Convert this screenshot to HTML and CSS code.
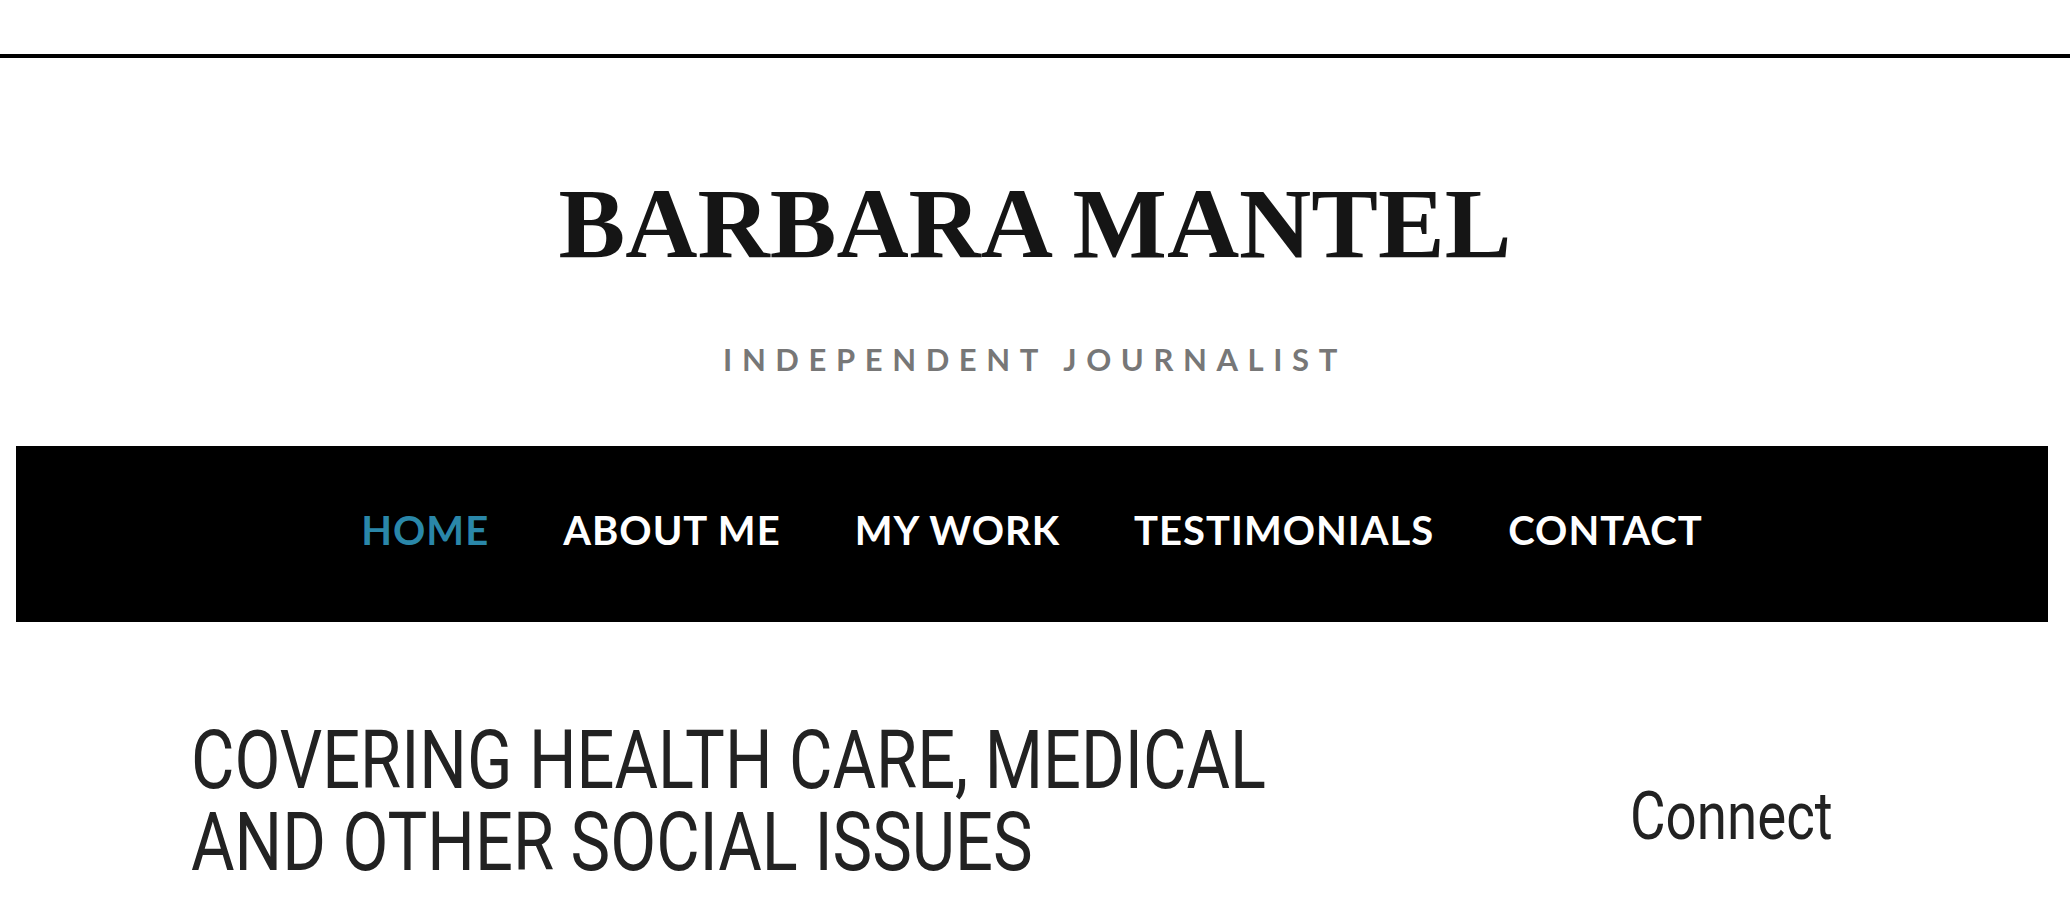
FILE: index.html
```html
<!DOCTYPE html>
<html lang="en">
<head>
<meta charset="utf-8">
<title>Barbara Mantel</title>
<link rel="stylesheet" href="styles.css">
</head>
<body>
<header class="site-header">
  <h1 class="site-title">BARBARA MANTEL</h1>
  <p class="site-tagline">INDEPENDENT JOURNALIST</p>
</header>
<nav class="main-nav">
  <ul class="nav-list">
    <li><a class="nav-link active" href="#">HOME</a></li>
    <li><a class="nav-link" href="#">ABOUT ME</a></li>
    <li><a class="nav-link" href="#">MY WORK</a></li>
    <li><a class="nav-link" href="#">TESTIMONIALS</a></li>
    <li><a class="nav-link" href="#">CONTACT</a></li>
  </ul>
</nav>
<div class="content">
  <main class="primary">
    <h2 class="page-heading"><span class="heading-line">COVERING HEALTH CARE, MEDICAL</span><span class="heading-line">AND OTHER SOCIAL ISSUES</span></h2>
  </main>
  <aside class="sidebar">
    <h3 class="widget-title">Connect</h3>
  </aside>
</div>
</body>
</html>
```

FILE: styles.css
```css
html, body {
  margin: 0;
  padding: 0;
  background: #ffffff;
}

body {
  overflow: hidden;
}

.site-header {
  margin-top: 54px;
  border-top: 4px solid #000000;
  padding-top: 116px;
  text-align: center;
}

.site-title {
  margin: 0;
  font-family: "Liberation Serif", "Times New Roman", serif;
  font-weight: 700;
  font-size: 100px;
  line-height: 100px;
  letter-spacing: 0;
  color: #151515;
}

.site-tagline {
  margin: 70px 0 0;
  font-family: "Lato", "Liberation Sans", sans-serif;
  font-weight: 700;
  font-size: 31px;
  line-height: 31px;
  letter-spacing: 9.6px;
  color: #777777;
}

.main-nav {
  margin: 71px 22px 0 16px;
  background: #000000;
  padding: 64px 0 72px;
}

.nav-list {
  list-style: none;
  margin: 0;
  padding: 0;
  display: flex;
  justify-content: center;
  gap: 74px;
}

.nav-link {
  display: block;
  font-family: "Lato", "Liberation Sans", sans-serif;
  font-weight: 700;
  font-size: 40px;
  line-height: 40px;
  letter-spacing: 1px;
  color: #ffffff;
  text-decoration: none;
}

.nav-link.active {
  color: #2a87a9;
}

.content {
  display: flex;
  padding: 97px 140px 0 191px;
}

.primary {
  flex: 1;
}

.page-heading {
  margin: 0;
  font-family: "Roboto", "Liberation Sans", sans-serif;
  font-weight: 400;
  font-size: 81.6px;
  line-height: 82px;
  color: #222222;
  transform: scaleX(0.818);
  transform-origin: left top;
  white-space: nowrap;
}

.heading-line {
  display: block;
}

.sidebar {
  width: 300px;
  padding-top: 56px;
}

.widget-title {
  margin: 0;
  font-family: "Roboto", "Liberation Sans", sans-serif;
  font-weight: 400;
  font-size: 67.5px;
  line-height: 81px;
  color: #222222;
  transform: scaleX(0.81);
  transform-origin: left top;
  white-space: nowrap;
}
```
